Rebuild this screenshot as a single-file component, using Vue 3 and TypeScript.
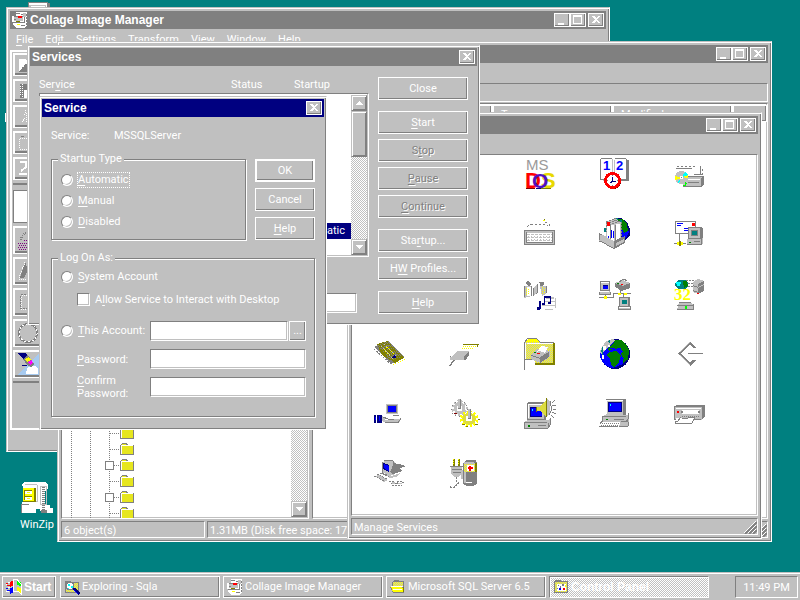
<script setup lang="ts">
import { h, ref } from 'vue'

/* ---------- small render helpers ---------- */

// Renders a caption whose accelerator key is marked with "&".
const Cap = (props: { text: string }) => {
  const i = props.text.indexOf('&')
  if (i < 0) return h('span', props.text)
  return h('span', [props.text.slice(0, i), h('u', props.text[i + 1]), props.text.slice(i + 2)])
}
Cap.props = ['text']

type Shape =
  | [color: string, d: string]
  | [color: string, d: string, stroke: number, dash?: string]
  | { text: string; x: number; y: number; size: number; color: string; bold?: boolean; serif?: boolean }

const G = '#808080'
const L = '#c0c0c0'
const W = '#ffffff'
const N = '#000080'
const B = '#0000ff'
const Y = '#ffff00'
const O = '#808000'
const R = '#ff0000'
const M = '#800000'
const T = '#008080'
const C = '#00ffff'
const E = '#008000'
const K = '#dcdc40'

// Yellow rectangle with a one-pixel silver checkerboard over it.
function dither(x: number, y: number, w: number, height: number): Shape[] {
  let rows = ''
  for (let i = 0; i < height; i++) {
    const off = i % 2
    rows += `M${x + off} ${y + i + 0.5}h${w - off}`
  }
  return [
    [Y, `M${x} ${y}h${w}v${height}h${-w}z`],
    [L, rows, 1, '1 1'],
  ]
}

const art: Record<string, Shape[]> = {
  msdos: [
    { text: 'MS', x: 2, y: 12, size: 15, color: '#9a9a9a' },
    { text: 'D', x: 1, y: 30, size: 22, color: R, bold: true },
    { text: 'S', x: 17, y: 30, size: 22, color: '#e8d800', bold: true },
    { text: 'O', x: 8, y: 30, size: 21, color: '#5010c0', bold: true },
    [M, 'M2 30h9v1h-9z'],
    [O, 'M17 30h10v1h-10z'],
    [N, 'M12 30h5v1h-5z'],
  ],
  datetime: [
    [L, 'M4 2h26v21h-26z'],
    [G, 'M28 2h2v21h-2zM6 21h22v2h-22z'],
    [W, 'M1 0h27v21h-27z'],
    [G, 'M1.5 .5h11M15.5 .5h11M1.5 .5v21M27.5 1v20M2 21.5h26', 1],
    [L, 'M13.5 1v18M15.5 2v18', 1],
    { text: '1', x: 4, y: 12, size: 13, color: B, bold: true },
    { text: '2', x: 17, y: 12, size: 13, color: B, bold: true },
    [M, 'M14 15a8 8 0 1 0 .1 0z'],
    [R, 'M13.5 14a8.500 8.500 0 1 0 .1 0z'],
    [W, 'M13.500 17a5.500 5.500 0 1 0 .1 0z'],
    [N, 'M13.500 19v4h3M13.500 23l-2 2', 1],
    [G, 'M13 17h1v1h-1zM13 27h1v1h-1zM8 22h1v1h-1zM18 22h1v1h-1z'],
  ],
  cdrom: [
    [G, 'M3 8.500h18M28 11v7', 1, '2 2'],
    [G, 'M2 10.500h16M20 16.500h8M26.500 8v8', 1],
    [L, 'M10 19l4-1h16v8l-3 3h-18z'],
    [G, 'M27 20l3-3v9l-3 3zM9 28h18v1h-18zM14 18h16v1h-16z'],
    [W, 'M11 21h15v1h-15z'],
    [G, 'M14 24h11v1h-11z'],
    [L, 'M7.500 13a6.500 6.500 0 1 0 .1 0z'],
    [C, 'M8 19l3-5 3 3zM7 20l-2 6-2-2z'],
    [Y, 'M8 19l6-2v3zM7 20l-6-2v4z'],
    ['#00ff00', 'M11 24l2 2-2 1zM9 27h3v1h-3z'],
    [W, 'M6 18h3v3h-3z'],
    [G, 'M7 19h1v1h-1z'],
  ],
  keyboard: [
    [G, 'M3 8.500l4-2h15l3 2v-3l-5-2', 1, '2 2'],
    [Y, 'M19 2h2v1h-2z'],
    [O, 'M20 1h1v1h-1z'],
    [L, 'M0 13h31v14h-31z'],
    [G, 'M0 12.500h31M.5 12v15M0 26.500h31M30.500 12v15', 1],
    [W, 'M3 15h25v9h-25z'],
    [L, 'M3 16.500h25M3 19.500h25M3 22.500h25', 1, '3 1'],
    [L, 'M4 18.500h24M4 21.500h24', 1, '1 2'],
    [G, 'M2.500 14v11M28.500 14v11M3 24.500h25', 1],
  ],
  mail: [
    [N, 'M16 0h6l6 4 3 7v6l-4 5h-6z'],
    [B, 'M22 2l5 5 3 7-3 6-5-2z'],
    [E, 'M18 1h5l5 5 1 7-4 2-4-8z'],
    [T, 'M14 1h2v1h-2zM17 0h2v2h-2zM21 2h2v2h-2zM5 10h2v4h-2z'],
    [L, 'M7 3l10-2 5 3v18l-9 4-6-6z'],
    [G, 'M7 3.500l10-3M10 5l8-3M13 6l8-3M22.500 4v16M7 4v10', 1, '2 1'],
    [W, 'M8 5h3v18h-3zM12 7h3v18h-3zM17 6h4v18h-4z'],
    [G, 'M11.500 6v15M16.500 7v16', 1],
    [B, 'M12 12h1v8h-1zM14 13h1v7h-1zM9 18h1v4h-1z'],
    [R, 'M8 4h3v4h-3z'],
    [L, 'M0 15l15 8 11-5v7l-11 6-15-8z'],
    [G, 'M15 23l11-5v7l-11 6zM0 15.500h3v1h-3zM0 15h1v9h-1zM0 23l15 8v-1l-15-8z'],
    [L, 'M17 25l8-4v3l-8 4z'],
  ],
  msmail: [
    [G, 'M1 3h21v13h-21z'],
    [W, 'M2 4h19v11h-19z'],
    [B, 'M3 5h6v1h-6zM3 7h4v1h-4zM10 10h5v1h-5zM10 12h4v1h-4z'],
    [R, 'M18 5h3v3h-3z'],
    [G, 'M14 9h13l2 2v10h-15z'],
    [L, 'M15 10h11v10h-11z'],
    [G, 'M17 12h7v6h-7z'],
    [T, 'M18 13h5v4h-5z'],
    [L, 'M13 21h14l2-2v6l-2 2h-14z'],
    [G, 'M13 26h15v1h-15zM27 20h1v6h-1zM20 23h6v1h-6z'],
    [E, 'M15 24h2v1h-2z'],
    [G, 'M5.500 16v7M0 25.500h12', 1],
    [Y, 'M3 24h6v3h-6z'],
    [O, 'M5 23h2v5h-2z'],
  ],
  multimedia: [
    [G, 'M1 5l3-2 3 3-2 3zM15 4h5v3l-3 2zM9 10l5-5v10l-5 3z'],
    [L, 'M0 8h8v10l-8 2zM16 8h6v8l-4 2zM10 9l3-3v9l-3 2z'],
    [W, 'M3 9h4v9h-4z'],
    [Y, 'M2 10v8M4.500 11v6M18.500 9v8M20.500 10v6', 1, '1 1'],
    [G, 'M.5 8v11M7.500 8v10M22.500 8v7', 1],
    [L, 'M22 19h8v2h-8zM20 23h12v1h-12zM18 27h14v1h-14zM21 31h8v1h-8zM31 20h1v10h-1z'],
    [N, 'M20 18h7v2h-7zM20 18h1v8h-1zM26 18h1v7h-1zM18 25h3v2h-3zM24 24h3v2h-3zM15 23h2v8h-2zM13 29h3v3h-3z'],
  ],
  network: [
    [G, 'M1 3h10v10h-10zM0 14h12v3h-12z'],
    [L, 'M2 4h8v8h-8zM1 13h10v3h-10z'],
    [W, 'M2 4h8v1h-8zM1 13h9v1h-9z'],
    [B, 'M4 7h5v4h-5z'],
    [N, 'M4 7h5v1h-5z'],
    [L, 'M16 5l8-3 7 3v5l-8 3-7-4z'],
    [G, 'M20 4l5-3 3 2M16 8l7 4 8-3', 1],
    [G, 'M16 5l8 3 7-3v5l-8 3-7-4z'],
    [L, 'M18 5l6-2 5 2-5 3z'],
    [R, 'M22 6h2v1h-2z'],
    [E, 'M18 5h2v1h-2z'],
    [G, 'M0 19.500h14v-4h18M6.500 17v3M21.500 12v4M24.500 16v4', 1],
    [Y, 'M5 18h3v3h-3zM19 15h3v2h-3zM25 15h3v2h-3z'],
    [G, 'M20 19h11v10h-11zM19 28h13v4h-13z'],
    [L, 'M21 20h8v8h-8zM20 29h11v2h-11z'],
    [T, 'M23 22h5v4h-5z'],
    [W, 'M20 29h11v1h-11z'],
  ],
  odbc: [
    [T, 'M1 5l3-3h7l3 3v4l-3 2h-7l-3-3z'],
    [C, 'M2 4h5l-1 4h-3z'],
    [E, 'M9 3h4l1 5-4 2z'],
    [G, 'M12 2.500h8M14 5.500h6M14 8.500h6', 1, '2 1'],
    [L, 'M19 4l5-3 6 2v10l-6 3-5-2z'],
    [G, 'M24 6l6-3v3l-6 3zM24 10l6-3v6l-6 3zM19 7l5 2v1l-5-2zM19 12l5 2v1l-5-2z'],
    [R, 'M23 15h2v1h-2z'],
    [W, 'M5 11h12v13h-12z'],
    [L, 'M5 24h12l2 3v5h-16z'],
    [G, 'M3 27.500h16M3 31.500h17M19.500 26v5M5 24.500h12', 1],
    ['#00ff00', 'M11 28h2v3h-2z'],
    { text: '32', x: 0, y: 22, size: 17, color: Y, bold: true, serif: true },
  ],
  card: [
    [G, 'M0 9l14-6 17 16-14 7z'],
    [O, 'M3 6l11-3 16 17-9 5-13-8z'],
    [G, 'M4 7l15 17M6 6l15 17M8 5l15 17M10 4l15 17M12 4l15 17M14 4l15 16', 1, '1 1'],
    [L, 'M7 8l12 13M10 6l13 13', 1, '2 1'],
    [Y, 'M13 9l8 8-3 3-8-8z', 1, '1 2'],
    [N, 'M17 20l4-4 1 4z'],
    [G, 'M0 11l18 16', 1, '2 1'],
    [Y, 'M19 27l12-6', 1, '1 1'],
  ],
  scsi: [
    [O, 'M14 6h16v1h-16zM28 7h1v2h-1z'],
    [Y, 'M14 8.500h14', 1, '1 1'],
    [Y, 'M13 10.500h12', 1, '1 1'],
    [L, 'M2 19l7-6h11v3l-4 6h-15z'],
    [G, 'M15 18l5-4v3l-3 5h-7v-1h5zM1 18h1v4h-1zM6 22l-5 7-1-1 4-6z'],
    [W, 'M4 19h10v1h-10z'],
    [L, 'M1 19h14v3h-14z'],
  ],
  printers: [
    ...dither(1, 4, 29, 22),
    [Y, 'M2 4l2-3h9l3 3z'],
    [G, 'M1 4l2-3M3 .5h10M13 1l3 3M16 4.500h14', 1],
    [W, 'M3 5.500h26M1.500 5v16', 1],
    [O, 'M29 5h2v22h-2zM11 25h20v2h-20z'],
    [W, 'M0 21h11v11h-11z'],
    [G, 'M0 21h10v1h-10zM0 4h1v28h-1z'],
    [L, 'M7 17l7-6 12 2v6l-10 6-9-4z'],
    [G, 'M16 19l9-5v5l-9 6zM7 17l9 3v1l-9-3z'],
    [W, 'M13 14l4-6 7 1-3 6z'],
    [L, 'M9 16l6-3 7 2-7 4z'],
    [R, 'M13 15h3v1h-3z'],
    [E, 'M10 14h2v1h-2z'],
  ],
  world: [
    [N, 'M16 1a15 15 0 1 0 .1 0z'],
    [B, 'M15 2a14 14 0 1 0 .1 0z'],
    [L, 'M6 4l7-3 3 1-6 7-8 7-1-3z'],
    [T, 'M4 18l-2-5 2-5 2 1-2 4zM8 3l3-1v3z'],
    [E, 'M16 2l6 0 5 4 3 6-1 10-4-1-3-5 2-3-3-2-7 0-4 2-1-3 5-4z'],
    [E, 'M11 14l6-1 5 5-2 6-5 5-3-2-1-7-4-3zM24 21h4l-2 4-2 0z'],
    [B, 'M11 10h5v1h-5zM18 10h4v2h-4z'],
    [W, 'M3 17h2v4h-2zM4 8h3v4h-3zM9 7h2v2h-2z'],
    [N, 'M29 20l-3 6-6 4h-6l10-4z'],
  ],
  sql: [
    [G, 'M4 15.500l12-12 7 6.500h-4l-3-3-9 8.500 9 9 3-3h4l-7 6.500z'],
    [G, 'M14 15h15v1h-15z'],
    [L, 'M6 14l10-10M6 17l10 10', 1],
  ],
  pcmcia: [
    [L, 'M12 6h12v10h-12z'],
    [G, 'M13 7h10v8h-10z'],
    [B, 'M14 8h8v6h-8z'],
    [N, 'M0 17h2v8h-2zM3 17h5v8h-5z'],
    [B, 'M1 19h1v3h-1zM5 18h1v5h-1z'],
    [L, 'M8 18l6 3h13l-2 4h-12l-5-2z'],
    [W, 'M16 17h10v1h-10zM11 21h9v1h-9z'],
    [G, 'M11 24.500h13l3-4M9 19l5 2h6M19 17.500h6', 1],
  ],
  services: [
    [L, 'M10.500 4a6 6 0 1 0 .1 0z'],
    [L, 'M10.500 3a7 7 0 1 0 .1 0z', 2, '2 2'],
    [G, 'M10.500 3a8 8 0 1 0 .1 0z', 1, '1 3'],
    [W, 'M8 8h5v5h-5z'],
    [G, 'M9 1h3v10h-3z'],
    [L, 'M9 1h2v9h-2z'],
    [M, 'M5 15h3v1h-3z'],
    [K, 'M20 15a7 6 0 1 0 .1 0z'],
    [Y, 'M20 14a8 7 0 1 0 .1 0z', 3, '2 2'],
    [W, 'M17 18h6v5h-6z'],
    [G, 'M19 11h3v10h-3z'],
    [L, 'M19 11h2v9h-2z'],
    [O, 'M13 26h3v1h-3zM17 28h2v1h-2zM26 26h3v1h-3zM29 21h2v1h-2z'],
  ],
  sounds: [
    [G, 'M3 5l2-1h17v17l-2 2h-17z'],
    [L, 'M4 6h16v15h-16z'],
    [W, 'M4 6h16v1h-16zM4 6h1v14h-1z'],
    [N, 'M6 9h12v10h-12z'],
    [B, 'M7 10h11v8h-11z'],
    [C, 'M8 11h1v2h-1z'],
    [L, 'M1 23l3-1h20l2-2v8l-3 3h-22z'],
    [G, 'M0 24.500h23M.5 24v7M0 30.500h24M24 25v5l2-3v-7M14 27.500h8', 1],
    [E, 'M4 27h2v2h-2z'],
    [K, 'M12 9h4l7-8v18l-7-6h-4z'],
    [O, 'M12 9h1v5h-1zM22 0h1v19h-1z'],
    [L, 'M23 1l3 3v11l-3 3z'],
    [G, 'M26 3l1 5v5l-2 4M28 5l3-3M28 8l4-1M29 11h3M28 14l4 2M27 17l3 3', 1],
  ],
  system: [
    [G, 'M7 1h19l1 1v15h-20z'],
    [L, 'M7 2h17v15h-17z'],
    [W, 'M7 2h17v1h-17zM7 2h1v14h-1z'],
    [N, 'M9 4h14v10h-14z'],
    [B, 'M10 5h12v8h-12z'],
    [C, 'M11 6h1v2h-1z'],
    [L, 'M4 18l2-1h22l2-2v7l-2 3h-24z'],
    [G, 'M3 18.500h24M3.500 18v6M27 24l2-3v-6M15 21.500h10', 1],
    [E, 'M7 21h2v1h-2z'],
    [W, 'M2 24h24l-2 5h-24z'],
    [G, 'M3 25.500h19M2 27.500h18', 1, '1 1'],
    [G, 'M0 28.500h19M1 26l2-3', 1],
    [L, 'M22 23h8v4l-3 2h-7z'],
    [G, 'M22 23.500h7M30 24l-1 4-3 1M20 28.500h7', 1],
  ],
  tape: [
    [G, 'M2 7h28v2h-28zM28 7h3v11l-3 4z'],
    [L, 'M1 9h27v13h-27z'],
    [G, 'M.5 8v14M0 8.500h28M0 21.500h27', 1],
    [W, 'M2 10h25v1h-25zM8 12h17v4h-17z'],
    [G, 'M7 13h2v2h-2zM24 13h2v2h-2z'],
    [R, 'M3 13h2v2h-2z'],
    [G, 'M8 18.500h18', 1, '1 1'],
    [W, 'M2 20h18v6h-18z'],
    [G, 'M1 26v-3h3l3-4M8 20l4 1 4-2h5l-3 6h-16', 1],
  ],
  ports: [
    [L, 'M8 4l7-2 6 2v12l-6 2-7-4z'],
    [G, 'M10 3l8-1 1 1v11M8 4v11l7 3', 1],
    [N, 'M9 5l6 2v7l-6-3z'],
    [B, 'M10 6l5 2v5l-5-3z'],
    [G, 'M20 5l9 2 2 2-6 1 3 3-9 3-3-2z'],
    [L, 'M12 17l6 1 8-3-4 4-6 1zM1 18l4-1 9 5-4 2z'],
    [G, 'M0 18l10 5M3 16l10 5M6 15l9 4', 1, '2 1'],
    [G, 'M15 23h4v2h4v-2h4v1h4M17 25h12M18 27h10', 1, '2 1'],
    [L, 'M18 24h3v2h-3zM24 25h4v1h-4z'],
  ],
  ups: [
    [O, 'M4 1h2v7h-2zM9 1h2v7h-2z'],
    [Y, 'M4.500 1v6M9.500 1v6', 1, '1 1'],
    [L, 'M2 8h11v7l-3 4h-5l-3-4z'],
    [G, 'M1 8h13v1h-13zM3 11h10v1h-10zM4 14h8v1h-8z'],
    [G, 'M7.500 19v4l2 2-4 4h-4l-3-2', 1, '2 1'],
    [L, 'M12 12h2v9h-2z'],
    [G, 'M14 5l4-3h7l3 3v21l-4 2h-6l-4-2z'],
    ...dither(15, 5, 12, 9),
    [L, 'M15 4h10v2h-10zM15 14h2v11h-2z'],
    [O, 'M26 5h2v9h-2z'],
    [W, 'M18 7h7v6h-7z'],
    [R, 'M19 9h5v2h-5zM20 8h2v5h-2z'],
    [W, 'M17 24h6v1h-6z'],
    [G, 'M17 2.500h10', 1, '2 1'],
  ],
  winzip: [
    [W, 'M2 2l3-2h20l3 3v3l-3 3v14h5v8h-9l-1-4h-4v4h-14v-11h1v-14z'],
    [L, 'M5 2h12v1h-12zM5 19h12v1h-12zM17 3h1v17h-1z'],
    [O, 'M14 6h2v14h-13v-1h11z'],
    [Y, 'M3 6h11v13h-11z'],
    [W, 'M5 8h7v4h-7zM5 14h7v4h-7z'],
    [O, 'M4 8h1v10h-1zM5 8h7v1h-7zM5 14h7v1h-7z'],
    [Y, 'M7 10h3v1h-3zM7 16h3v1h-3z'],
    [G, 'M23.500 5v23', 3, '1 1'],
    [L, 'M20 4h7v1h-7zM20 22h7v1h-7zM20 5h1v18h-1zM26 5h1v18h-1z'],
    [G, 'M1 22h8v1h-8zM1 22h1v9h-1zM21 28h6v3h-6z'],
    [W, 'M2 24h9v7h-9zM28 26h5v5h-5z'],
  ],
  computer: [
    [G, 'M8 0h20v1h2v12h-22z'],
    [W, 'M9 1h18v8h-18z'],
    [L, 'M9 3h17v6h-17z'],
    [W, 'M11 4h14v1h-14z'],
  ],
  start: [
    [R, 'M4 3l4-2v5l-4 2z'],
    ['#00ff00', 'M11 2l4 1v4l-4-1z'],
    [B, 'M4 9l4-1v5l-4 2z'],
    [Y, 'M11 8l4 1v5l-4-2z'],
    [W, 'M7 1l4-1 2 3 2 2v10l-3-3-5 1z', 1],
    [R, 'M0 4h2v1h-2zM1 6h3v1h-3z'],
    [B, 'M0 9h2v1h-2zM1 11h3v1h-3z'],
    [W, 'M0 5h1v1h-1zM2 3h2v1h-2zM0 12h3v1h-3zM2 8h2v1h-2z'],
  ],
  explorer: [
    [G, 'M1 2h5l1 1h8v11h-14z'],
    ...dither(2, 4, 12, 9),
    [W, 'M6 3a4 4 0 1 0 .1 0z'],
    [G, 'M6 3a4 4 0 1 0 .1 0z', 1],
    [C, 'M4 5h2v2h-2zM7 7h2v2h-2zM4 9h1v1h-1z'],
    [N, 'M9 9l2 0 5 5-2 2-5-5z'],
    [B, 'M10 11l4 4', 1],
  ],
  collage: [
    [W, 'M4 0h11v14l-3 2h-7l-4-3v-3h-1v-6h4z'],
    [G, 'M2 4.500h10M12.500 3v8M1 10.500h12M4 1.500h4M9 13h4', 1],
    [L, 'M2 5h9v4h-9zM11 1h3v4h-3z'],
    [R, 'M6 4h4v2h-4z'],
    [O, 'M4 9h4v1h-4z'],
    [Y, 'M5 12h3v1h-3z'],
    [G, 'M14.500 2v12M2 7.500h3M9 2.500h3', 1, '2 1'],
  ],
  folderopen: [
    [G, 'M2 3l2-2h4l1 1h5v12h-11l-3-6h2z'],
    ...dither(3, 3, 10, 4),
    [Y, 'M1 8h11l2 5h-11z'],
    [W, 'M1 7h12v1h-12zM3 10h9v1h-9z'],
    [O, 'M13 8h1v5h-1z'],
  ],
  panel: [
    [G, 'M1 3l1-2h5l1 1h7v12h-14z'],
    ...dither(2, 3, 12, 10),
    [W, 'M4 5h9v7h-9z'],
    [G, 'M5 6h1v1h-1zM7 7h1v2h-1zM9 5h2v2h-2zM4 9h1v1h-1z'],
    [B, 'M6 9h2v2h-2z'],
    [R, 'M10 9h2v2h-2z'],
    [Y, 'M12 6h1v2h-1z'],
  ],
  folder: [
    [G, 'M0 4l2-2h4l2 2h6v10H0z'],
    ['#e6e61e', 'M2 3h4v1h-4zM1 4h12v9h-12z'],
    [W, 'M1 5h12v-1h-12zM1 5h1v8h-1z'],
  ],
  toolOpen: [
    [W, 'M2 3h6l2 2h10v10h-18z'],
    [G, 'M8 8l-6 8h16l4-8z'],
    [W, 'M3 3h4v8h-4z'],
  ],
  toolSave: [
    [G, 'M3 2h16v14h-16z'],
    [W, 'M5.500 2v14M3.500 4v10', 1, '1 1'],
    [W, 'M7 8h8v8h-8z'],
  ],
  toolCopy: [[W, 'M9 2l-2 6M8 10l-4 5M9.500 5v9', 1, '1 1']],
  toolPaste: [
    [W, 'M2.500 4h14v11h-14z', 1, '1 1'],
    [G, 'M4 2.500h3', 1],
  ],
  toolUndo: [[W, 'M3 2h6v5l-5 4M2 14h9', 2]],
  toolDrop: [
    [G, 'M13 3a9 8 0 0 0-9 8', 2, '1 1'],
    ['#800080', 'M1 14.500h14M2 16.500h14M1 18.500h14M2 20.500h14M7 11.500h8', 1, '1 1'],
  ],
  toolText: [
    [G, 'M8 2l-5 16h4l4-8z'],
    [W, 'M8 2l-6 16M2 19.500h12', 1, '1 1'],
  ],
  toolRect: [
    [G, 'M3.500 3.500h16v14h-16z', 1, '2 1'],
    [W, 'M4.500 4.500h14v14h-14z', 1, '1 1'],
  ],
  toolOval: [
    [G, 'M11 2a9 9 0 1 0 .1 0z', 2],
    [W, 'M11 2a9 9 0 1 0 .1 0z', 1, '2 2'],
  ],
  toolScope: [
    ['#a6caf0', 'M22 0v22h-22z'],
    [W, 'M10 15l4-2h4l3 3v5h-12z'],
    [N, 'M0 0h9l2 4-4 2z'],
    [G, 'M6 6l5-4 6 9-2 3-4-1z'],
    [Y, 'M8 6l4-2 2 3-4 2z'],
    ['#ff00ff', 'M11 9l4-2 1 3-3 2z'],
    [N, 'M5 12h5v1h-5z'],
  ],
}

// Draws one entry of the art table on an integer pixel grid.
const Pic = (props: { name: string; w: number; h?: number }) =>
  h(
    'svg',
    {
      width: props.w,
      height: props.h ?? props.w,
      viewBox: `0 0 ${props.w} ${props.h ?? props.w}`,
      'shape-rendering': 'crispEdges',
      'aria-hidden': 'true',
    },
    art[props.name].map((s) => {
      if (!Array.isArray(s)) {
        return h(
          'text',
          {
            x: s.x,
            y: s.y,
            fill: s.color,
            'font-size': s.size,
            'font-weight': s.bold ? 700 : 400,
            'font-family': s.serif ? 'Liberation Serif, serif' : 'Liberation Sans, sans-serif',
          },
          s.text,
        )
      }
      const [color, d, stroke, dash] = s
      return stroke
        ? h('path', { d, fill: 'none', stroke: color, 'stroke-width': stroke, 'stroke-dasharray': dash })
        : h('path', { d, fill: color })
    }),
  )
Pic.props = ['name', 'w', 'h']

/* ---------- data ---------- */

const menus = ['&File', '&Edit', '&Settings', '&Transform', '&View', '&Window', '&Help']
const smallTools = ['toolOpen', 'toolSave', 'toolCopy', 'toolPaste', 'toolUndo']
const largeTools = ['toolDrop', 'toolText', 'toolRect', 'toolOval', 'toolScope']

const serviceActions = [
  { text: 'Close', disabled: false, lead: false },
  { text: '&Start', disabled: false, lead: true },
  { text: 'S&top', disabled: true, lead: false },
  { text: '&Pause', disabled: true, lead: false },
  { text: '&Continue', disabled: true, lead: false },
  { text: 'Sta&rtup...', disabled: false, lead: true },
  { text: 'H&W Profiles...', disabled: false, lead: false },
  { text: '&Help', disabled: false, lead: true },
]

const startupTypes = ['&Automatic', '&Manual', '&Disabled']
const startup = ref('')
const account = ref('')
const interact = ref(false)

const applets = [
  { name: 'msdos', row: 1, col: 3 },
  { name: 'datetime', row: 1, col: 4 },
  { name: 'cdrom', row: 1, col: 5 },
  { name: 'keyboard', row: 2, col: 3 },
  { name: 'mail', row: 2, col: 4 },
  { name: 'msmail', row: 2, col: 5 },
  { name: 'multimedia', row: 3, col: 3 },
  { name: 'network', row: 3, col: 4 },
  { name: 'odbc', row: 3, col: 5 },
  { name: 'card', row: 4, col: 1 },
  { name: 'scsi', row: 4, col: 2 },
  { name: 'printers', row: 4, col: 3 },
  { name: 'world', row: 4, col: 4 },
  { name: 'sql', row: 4, col: 5 },
  { name: 'pcmcia', row: 5, col: 1 },
  { name: 'services', row: 5, col: 2 },
  { name: 'sounds', row: 5, col: 3 },
  { name: 'system', row: 5, col: 4 },
  { name: 'tape', row: 5, col: 5 },
  { name: 'ports', row: 6, col: 1 },
  { name: 'ups', row: 6, col: 2 },
]

const treeRows = [false, false, true, false, true, false]

const tasks = [
  { icon: 'explorer', text: 'Exploring - Sqla', active: false },
  { icon: 'collage', text: 'Collage Image Manager', active: false },
  { icon: 'folderopen', text: 'Microsoft SQL Server 6.5', active: false },
  { icon: 'panel', text: 'Control Panel', active: true },
]
</script>

<template>
  <div class="screen">
    <main class="desktop">
      <Pic class="icon-computer" name="computer" :w="32" />
      <span class="icon-edge"></span>
      <a class="shortcut" href="#winzip">
        <Pic name="winzip" :w="34" :h="32" />
        <span>WinZip</span>
      </a>

      <!-- Collage Image Manager -->
      <section class="window sizable collage">
        <header class="title">
          <Pic name="collage" :w="16" />
          <h2>Collage Image Manager</h2>
          <button class="ctl" aria-label="Minimize"><svg width="14" height="12"><path d="M3 9h6v2H3z" /></svg></button>
          <button class="ctl" aria-label="Maximize"><svg width="14" height="12"><path d="M2 1h9v9H2zM3 3v6h7V3z" fill-rule="evenodd" /></svg></button>
          <button class="ctl close" aria-label="Close"><svg width="14" height="12"><path d="M3 2h2l2 2 2-2h2L8 5.500 11 9H9L7 7 5 9H3l3-3.500z" /></svg></button>
        </header>
        <nav class="menu">
          <button v-for="m in menus" :key="m"><Cap :text="m" /></button>
        </nav>
        <div class="tools">
          <button v-for="t in smallTools" :key="t" class="tool" :aria-label="t.slice(4)"><Pic :name="t" :w="22" :h="17" /></button>
          <hr />
          <div class="swatch"></div>
          <button v-for="t in largeTools" :key="t" class="tool large" :aria-label="t.slice(4)"><Pic :name="t" :w="22" /></button>
          <hr />
        </div>
      </section>

      <!-- Explorer -->
      <section class="window sizable exploring">
        <header class="title">
          <button class="ctl" aria-label="Minimize"><svg width="14" height="12"><path d="M3 9h6v2H3z" /></svg></button>
          <button class="ctl" aria-label="Maximize"><svg width="14" height="12"><path d="M2 1h9v9H2zM3 3v6h7V3z" fill-rule="evenodd" /></svg></button>
          <button class="ctl close" aria-label="Close"><svg width="14" height="12"><path d="M3 2h2l2 2 2-2h2L8 5.500 11 9H9L7 7 5 9H3l3-3.500z" /></svg></button>
        </header>
        <div class="menu"></div>
        <div class="band"></div>
        <div class="panes">
          <div class="sunken tree">
            <div class="tree-rows">
              <div v-for="(plus, i) in treeRows" :key="i" class="node">
                <svg width="58" height="16" shape-rendering="crispEdges">
                  <path d="M9.500 0v16M28.500 0v16M47.500 0v16M48 8.500h10" fill="none" stroke="#808080" stroke-dasharray="1 1" />
                  <path v-if="plus" d="M43.500 4.500h8v8h-8z" fill="#fff" stroke="#808080" />
                </svg>
                <Pic name="folder" :w="16" />
              </div>
            </div>
            <div class="scroll">
              <span class="track"></span>
              <button class="arrow" aria-label="Scroll down"><svg width="14" height="14"><path d="M3 5h8L7 9z" /></svg></button>
            </div>
          </div>
          <div class="sunken files">
            <table>
              <thead>
                <tr><th class="name"></th><th>Type</th><th>Modified</th><th class="rest"></th></tr>
              </thead>
            </table>
          </div>
        </div>
        <footer class="status">
          <span class="cell first">6 object(s)</span>
          <span class="cell">1.31MB (Disk free space: 175MB)</span>
          <svg class="grip" width="13" height="13"><path d="M1 13L13 1M5 13l8-8M9 13l4-4" stroke="#808080" stroke-width="2" /><path d="M0 12L12 0M4 12l8-8M8 12l4-4" stroke="#fff" /></svg>
        </footer>
      </section>

      <!-- Control Panel -->
      <section class="window sizable panel">
        <header class="title">
          <button class="ctl" aria-label="Minimize"><svg width="14" height="12"><path d="M3 9h6v2H3z" /></svg></button>
          <button class="ctl" aria-label="Maximize"><svg width="14" height="12"><path d="M2 1h9v9H2zM3 3v6h7V3z" fill-rule="evenodd" /></svg></button>
          <button class="ctl close" aria-label="Close"><svg width="14" height="12"><path d="M3 2h2l2 2 2-2h2L8 5.500 11 9H9L7 7 5 9H3l3-3.500z" /></svg></button>
        </header>
        <div class="menu"></div>
        <div class="sunken applets">
          <Pic
            v-for="a in applets"
            :key="a.name"
            :name="a.name"
            :w="32"
            :style="{ gridRow: a.row, gridColumn: a.col }"
          />
        </div>
        <footer class="status">
          <span class="cell">Manage Services</span>
          <svg class="grip" width="13" height="13"><path d="M1 13L13 1M5 13l8-8M9 13l4-4" stroke="#808080" stroke-width="2" /><path d="M0 12L12 0M4 12l8-8M8 12l4-4" stroke="#fff" /></svg>
        </footer>
      </section>

      <!-- Services -->
      <section class="window services">
        <header class="title">
          <h2>Services</h2>
          <button class="ctl close" aria-label="Close"><svg width="14" height="12"><path d="M3 2h2l2 2 2-2h2L8 5.500 11 9H9L7 7 5 9H3l3-3.500z" /></svg></button>
        </header>
        <div class="services-body">
          <div class="services-main">
            <div class="columns">
              <Cap text="Ser&vice" /><span>Status</span><span>Startup</span>
            </div>
            <div class="sunken list">
              <div class="rows">
                <div class="selected"><span>Automatic</span></div>
              </div>
              <div class="scroll">
                <button class="arrow" aria-label="Scroll up"><svg width="14" height="14"><path d="M3 9h8L7 5z" /></svg></button>
                <span class="thumb"></span>
                <span class="track"></span>
                <button class="arrow" aria-label="Scroll down"><svg width="14" height="14"><path d="M3 5h8L7 9z" /></svg></button>
              </div>
            </div>
            <input class="field params" type="text" aria-label="Startup parameters" />
          </div>
          <div class="actions">
            <button
              v-for="a in serviceActions"
              :key="a.text"
              class="btn"
              :class="{ lead: a.lead }"
              :disabled="a.disabled"
            ><Cap :text="a.text" /></button>
          </div>
        </div>
      </section>

      <!-- Service -->
      <section class="window service">
        <header class="title active">
          <h2>Service</h2>
          <button class="ctl close" aria-label="Close"><svg width="14" height="12"><path d="M3 2h2l2 2 2-2h2L8 5.500 11 9H9L7 7 5 9H3l3-3.500z" /></svg></button>
        </header>
        <form class="service-body" @submit.prevent>
          <div class="which"><span>Service:</span><span>MSSQLServer</span></div>
          <div class="upper">
            <fieldset>
              <legend>Startup Type</legend>
              <label v-for="(s, i) in startupTypes" :key="s" class="row">
                <input v-model="startup" type="radio" name="startup" :value="s" />
                <Cap :class="{ focus: i === 0 }" :text="s" />
              </label>
            </fieldset>
            <div class="actions">
              <button class="btn default">OK</button>
              <button class="btn" type="button">Cancel</button>
              <button class="btn" type="button"><Cap text="&Help" /></button>
            </div>
          </div>
          <fieldset class="logon">
            <legend>Log On As:</legend>
            <label class="row"><input v-model="account" type="radio" name="account" value="system" /><Cap text="&System Account" /></label>
            <label class="row nested"><input v-model="interact" type="checkbox" /><Cap text="A&llow Service to Interact with Desktop" /></label>
            <div class="entries">
              <label class="row"><input v-model="account" type="radio" name="account" value="this" /><Cap text="&This Account:" /></label>
              <div class="browse">
                <input class="field" type="text" aria-label="Account name" />
                <button class="btn" type="button">...</button>
              </div>
              <label class="indent" for="pw"><Cap text="&Password:" /></label>
              <input id="pw" class="field" type="password" />
              <label class="indent" for="pw2"><Cap text="&Confirm Password:" /></label>
              <input id="pw2" class="field" type="password" />
            </div>
          </fieldset>
        </form>
      </section>
    </main>

    <footer class="taskbar">
      <button class="btn start"><Pic name="start" :w="16" /><b>Start</b></button>
      <button v-for="t in tasks" :key="t.text" class="btn task" :class="{ pressed: t.active }">
        <Pic :name="t.icon" :w="16" /><span>{{ t.text }}</span>
      </button>
      <time class="clock">11:49 PM</time>
    </footer>
  </div>
</template>

<style>
body {
  margin: 0;
}
u {
  text-underline-offset: 2px;
}
</style>

<style scoped>
.screen {
  display: flex;
  flex-direction: column;
  height: 100vh;
  overflow: hidden;
  background: #008080;
  color: #fff;
  font: 11px/14px Roboto, 'Liberation Sans', sans-serif;
  user-select: none;
}
.screen * {
  box-sizing: border-box;
}
button,
input {
  margin: 0;
  padding: 0;
  border: 0;
  border-radius: 0;
  outline: 0;
  background: none;
  color: inherit;
  font: inherit;
}
svg {
  display: block;
  flex: none;
}
.desktop {
  position: relative;
  flex: 1;
  min-height: 0;
}
.icon-computer {
  position: absolute;
  left: 20px;
  top: 2px;
}
.icon-edge {
  position: absolute;
  left: 5px;
  top: 113px;
  width: 1px;
  height: 9px;
  background: #fff;
}
.shortcut {
  position: absolute;
  left: 10px;
  top: 482px;
  width: 54px;
  display: flex;
  flex-direction: column;
  align-items: center;
  gap: 4px;
  color: #fff;
  text-decoration: none;
}

/* windows */
.window {
  position: absolute;
  display: flex;
  flex-direction: column;
  padding: 2px;
  border: 1px solid;
  border-color: #c0c0c0 #fff #fff #c0c0c0;
  background: #c0c0c0;
  box-shadow: inset 1px 1px #fff, inset -1px -1px #808080;
}
.sizable {
  padding: 3px;
}
.collage {
  left: 6px;
  top: 7px;
  width: 604px;
  height: 445px;
}
.exploring {
  left: 57px;
  top: 41px;
  width: 715px;
  height: 501px;
}
.panel {
  left: 347px;
  top: 112px;
  width: 415px;
  height: 427px;
}
.services {
  left: 27px;
  top: 45px;
  width: 453px;
  height: 280px;
}
.service {
  left: 39px;
  top: 96px;
  width: 288px;
  height: 334px;
}
.title {
  display: flex;
  align-items: center;
  justify-content: flex-end;
  flex: none;
  height: 18px;
  padding: 0 2px;
  background: #808080;
}
.title.active {
  background: #000080;
}
.title h2 {
  flex: 1;
  margin: 0;
  font: bold 12px/16px 'Liberation Sans', sans-serif;
}
.title svg + h2 {
  padding-left: 2px;
}
.ctl {
  width: 16px;
  height: 14px;
  border: 1px solid #fff;
  background: #c0c0c0;
  box-shadow: inset -1px -1px #808080;
}
.ctl.close {
  margin-left: 2px;
}
.ctl svg,
.arrow svg {
  fill: #fff;
  shape-rendering: crispEdges;
}
.menu {
  display: flex;
  flex: none;
  height: 20px;
  padding-top: 2px;
  align-items: center;
}
.menu button {
  padding: 0 6px;
}
.sunken {
  border: 1px solid;
  border-color: #808080 #fff #fff #808080;
  background: #fff;
  box-shadow: inset -1px -1px #c0c0c0;
}

/* collage toolbox */
.tools {
  display: flex;
  flex-direction: column;
  gap: 3px;
  flex: none;
  width: 60px;
  height: 380px;
  margin-top: 1px;
  padding: 1px;
  border: 2px solid #fff;
  border-width: 2px 1px 2px 2px;
}
.tool {
  display: flex;
  height: 23px;
  padding: 2px 3px;
  border: 1px solid #fff;
  box-shadow: inset 1px 1px #fff, inset 0 -2px #808080;
}
.tool.large {
  height: 28px;
}
.tools hr {
  width: 100%;
  height: 2px;
  margin: 0;
  border: 0;
  background: #808080;
}
.swatch {
  flex: none;
  height: 33px;
  margin: 2px 0 0;
  border: 1px solid #808080;
  background: #fff;
}

/* explorer */
.band {
  flex: none;
  height: 19px;
  margin-bottom: 1px;
  border: 1px solid;
  border-color: #808080 #fff #fff #808080;
}
.panes {
  display: flex;
  flex: 1;
  min-height: 0;
  gap: 3px;
}
.tree {
  display: flex;
  width: 248px;
}
.tree-rows {
  display: flex;
  flex: 1;
  flex-direction: column;
  justify-content: flex-end;
  overflow: hidden;
}
.node {
  display: flex;
  flex: none;
}
.node:last-child {
  margin-bottom: -3px;
}
.files {
  flex: 1;
  overflow: hidden;
}
.files table {
  width: 100%;
  margin-top: 1px;
  border-collapse: separate;
  border-spacing: 0;
  table-layout: fixed;
}
.files th {
  width: 120px;
  height: 17px;
  padding: 2px 7px 0;
  border: 1px solid #fff;
  border-left-width: 2px;
  background: #c0c0c0;
  box-shadow: inset -1px -1px #808080;
  font-weight: 400;
  line-height: 12px;
  text-align: left;
}
.files .name {
  width: 179px;
}
.files .rest {
  width: auto;
}
.status {
  position: relative;
  display: flex;
  flex: none;
  gap: 2px;
  height: 17px;
  margin-top: 2px;
}
.cell {
  flex: 1;
  padding-left: 2px;
  border: 1px solid;
  border-color: #808080 #fff #fff #808080;
  line-height: 17px;
}
.cell.first {
  flex: none;
  width: 144px;
}
.grip {
  position: absolute;
  right: 1px;
  bottom: 1px;
}

/* scroll bars */
.scroll {
  display: flex;
  flex-direction: column;
  width: 16px;
  margin: 1px 1px 1px 0;
}
.arrow,
.thumb {
  flex: none;
  width: 16px;
  height: 16px;
  border: 1px solid #c0c0c0;
  border-color: #c0c0c0 #808080 #808080 #c0c0c0;
  background: #c0c0c0;
  box-shadow: inset 1px 1px #fff, inset -1px -1px #808080;
}
.thumb {
  height: 46px;
}
.track,
.pressed {
  background: repeating-conic-gradient(#fff 0 25%, #c0c0c0 0 50%) 0 0 / 2px 2px;
}
.track {
  flex: 1;
}

/* control panel */
.applets {
  display: grid;
  flex: 1;
  min-height: 0;
  overflow: hidden;
  grid-template-columns: repeat(auto-fill, 75px);
  grid-auto-rows: 60px;
  padding: 3px 0 0 22px;
}

/* buttons and fields */
.btn {
  height: 23px;
  border: 1px solid #fff;
  background: #c0c0c0;
  box-shadow: inset -1px -1px #808080;
}
.btn.default {
  box-shadow: inset 1px 1px #fff, inset -1px -1px #fff, inset -2px -2px #808080;
}
.btn:disabled {
  color: #808080;
  text-shadow: 1px 1px #fff;
}
.field {
  width: 100%;
  min-width: 0;
  height: 20px;
  padding: 0 3px;
  border: 1px solid;
  border-color: #808080 #fff #fff #808080;
  background: #fff;
  box-shadow: inset -1px -1px #c0c0c0;
  color: #000080;
}

/* services dialog */
.services-body {
  display: grid;
  grid-template-columns: 1fr 90px;
  gap: 9px;
  padding: 11px 9px;
}
.services-main {
  display: flex;
  flex-direction: column;
}
.columns {
  display: grid;
  grid-template-columns: 192px 63px 1fr;
  height: 16px;
  line-height: 16px;
}
.list {
  display: flex;
  height: 164px;
}
.rows {
  display: flex;
  flex: 1;
  flex-direction: column;
  justify-content: flex-end;
  padding-bottom: 17px;
}
.selected {
  height: 16px;
  padding: 1px 6px;
  background: #000080;
  text-align: right;
}
.params {
  width: auto;
  margin: 36px 12px 0 0;
}
.actions {
  display: flex;
  flex-direction: column;
  gap: 5px;
}
.btn.lead {
  margin-top: 6px;
}

/* service dialog */
.service-body {
  padding: 11px 9px;
}
.which {
  display: grid;
  grid-template-columns: 63px 1fr;
  line-height: 16px;
}
.upper {
  display: grid;
  grid-template-columns: 1fr 60px;
  gap: 9px;
  margin-top: 8px;
}
.upper .actions {
  gap: 6px;
  padding-top: 7px;
}
fieldset {
  min-width: 0;
  margin: 0;
  padding: 3px 8px 7px 9px;
  border: 1px solid #808080;
  box-shadow: 1px 1px #fff, inset 1px 1px #fff;
}
legend {
  padding: 0 2px;
  margin-left: -3px;
  background: #c0c0c0;
}
.logon {
  margin-top: 11px;
  padding: 1px 8px 16px 9px;
}
.row {
  display: flex;
  align-items: center;
  gap: 5px;
  height: 21px;
  white-space: nowrap;
}
.row input {
  flex: none;
  appearance: none;
  width: 12px;
  height: 12px;
  border: 1px solid;
  border-color: #808080 #fff #fff #808080;
  border-radius: 50%;
  background: #fff;
  box-shadow: inset -1px -1px #c0c0c0;
}
.nested {
  height: 25px;
  padding-left: 16px;
}
.nested input {
  width: 13px;
  height: 13px;
  border-radius: 0;
}
.focus {
  outline: 1px dotted #fff;
}
.entries {
  display: grid;
  grid-template-columns: 89px 1fr;
  grid-auto-rows: 26px;
  gap: 2px 0;
  margin-top: 6px;
  align-items: center;
}
.browse {
  display: flex;
  gap: 1px;
}
.browse .btn {
  flex: none;
  width: 17px;
  height: 20px;
}
.indent {
  padding-left: 16px;
  line-height: 13px;
}

/* taskbar */
.taskbar {
  display: flex;
  gap: 3px;
  flex: none;
  padding: 3px 2px 2px;
  border-top: 1px solid #c0c0c0;
  background: #c0c0c0;
  box-shadow: inset 0 1px #fff;
}
.taskbar .btn {
  display: flex;
  align-items: center;
  gap: 2px;
  height: 22px;
  padding: 0 3px;
}
.taskbar .start {
  flex: none;
  width: 54px;
  margin-right: 1px;
}
.start b {
  font: bold 12px/14px 'Liberation Sans', sans-serif;
}
.task {
  flex: 0 1 160px;
  min-width: 0;
  overflow: hidden;
  white-space: nowrap;
}
.taskbar .pressed {
  border-color: #808080 #fff #fff #808080;
  background: repeating-conic-gradient(#fff 0 25%, #c0c0c0 0 50%) 0 0 / 2px 2px;
  box-shadow: inset 1px 1px #fff;
  font: bold 12px/14px 'Liberation Sans', sans-serif;
}
.clock {
  flex: none;
  width: 63px;
  height: 22px;
  margin-left: auto;
  border: 1px solid;
  border-color: #808080 #fff #fff #808080;
  line-height: 22px;
  text-align: center;
}
</style>
